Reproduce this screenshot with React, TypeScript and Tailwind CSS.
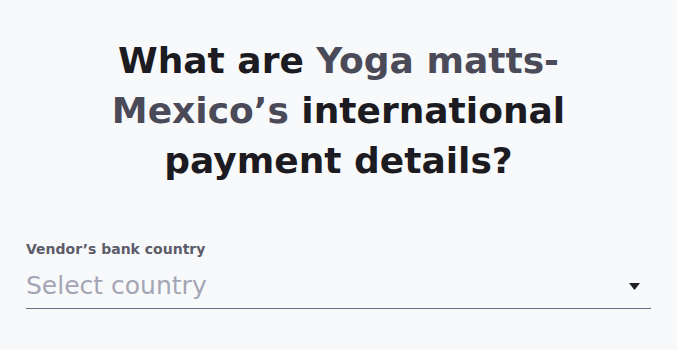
import React from 'react';

const font = { fontFamily: '"DejaVu Sans", "Liberation Sans", sans-serif' };

export default function App() {
  return (
    <div className="min-h-screen w-full bg-[#f8f9fa]" style={font}>
      <div className="flex flex-col px-[26px] pt-[36px]">
        <h1 className="text-center text-[36px] leading-[50px] font-bold text-[#1c1b21]">
          What are <span className="text-[#4a4a58]">Yoga matts-</span>
          <br />
          <span className="text-[#4a4a58]">Mexico’s</span> international
          <br />
          payment details?
        </h1>

        <div className="mt-[54px] flex flex-col">
          <label className="text-[14px] leading-[18px] font-semibold text-[#5d5c6b]">
            Vendor’s bank country
          </label>
          <button className="mt-[13px] flex items-center justify-between border-b border-[#6b6a80] pb-[7px] text-left">
            <span className="text-[25px] leading-[30px] text-[#a4a6b5]">Select country</span>
            <svg width="11" height="7" viewBox="0 0 11 7" className="mr-[11px]">
              <path d="M0 0H11L5.5 7Z" fill="#1f1f24" />
            </svg>
          </button>
        </div>
      </div>
    </div>
  );
}
